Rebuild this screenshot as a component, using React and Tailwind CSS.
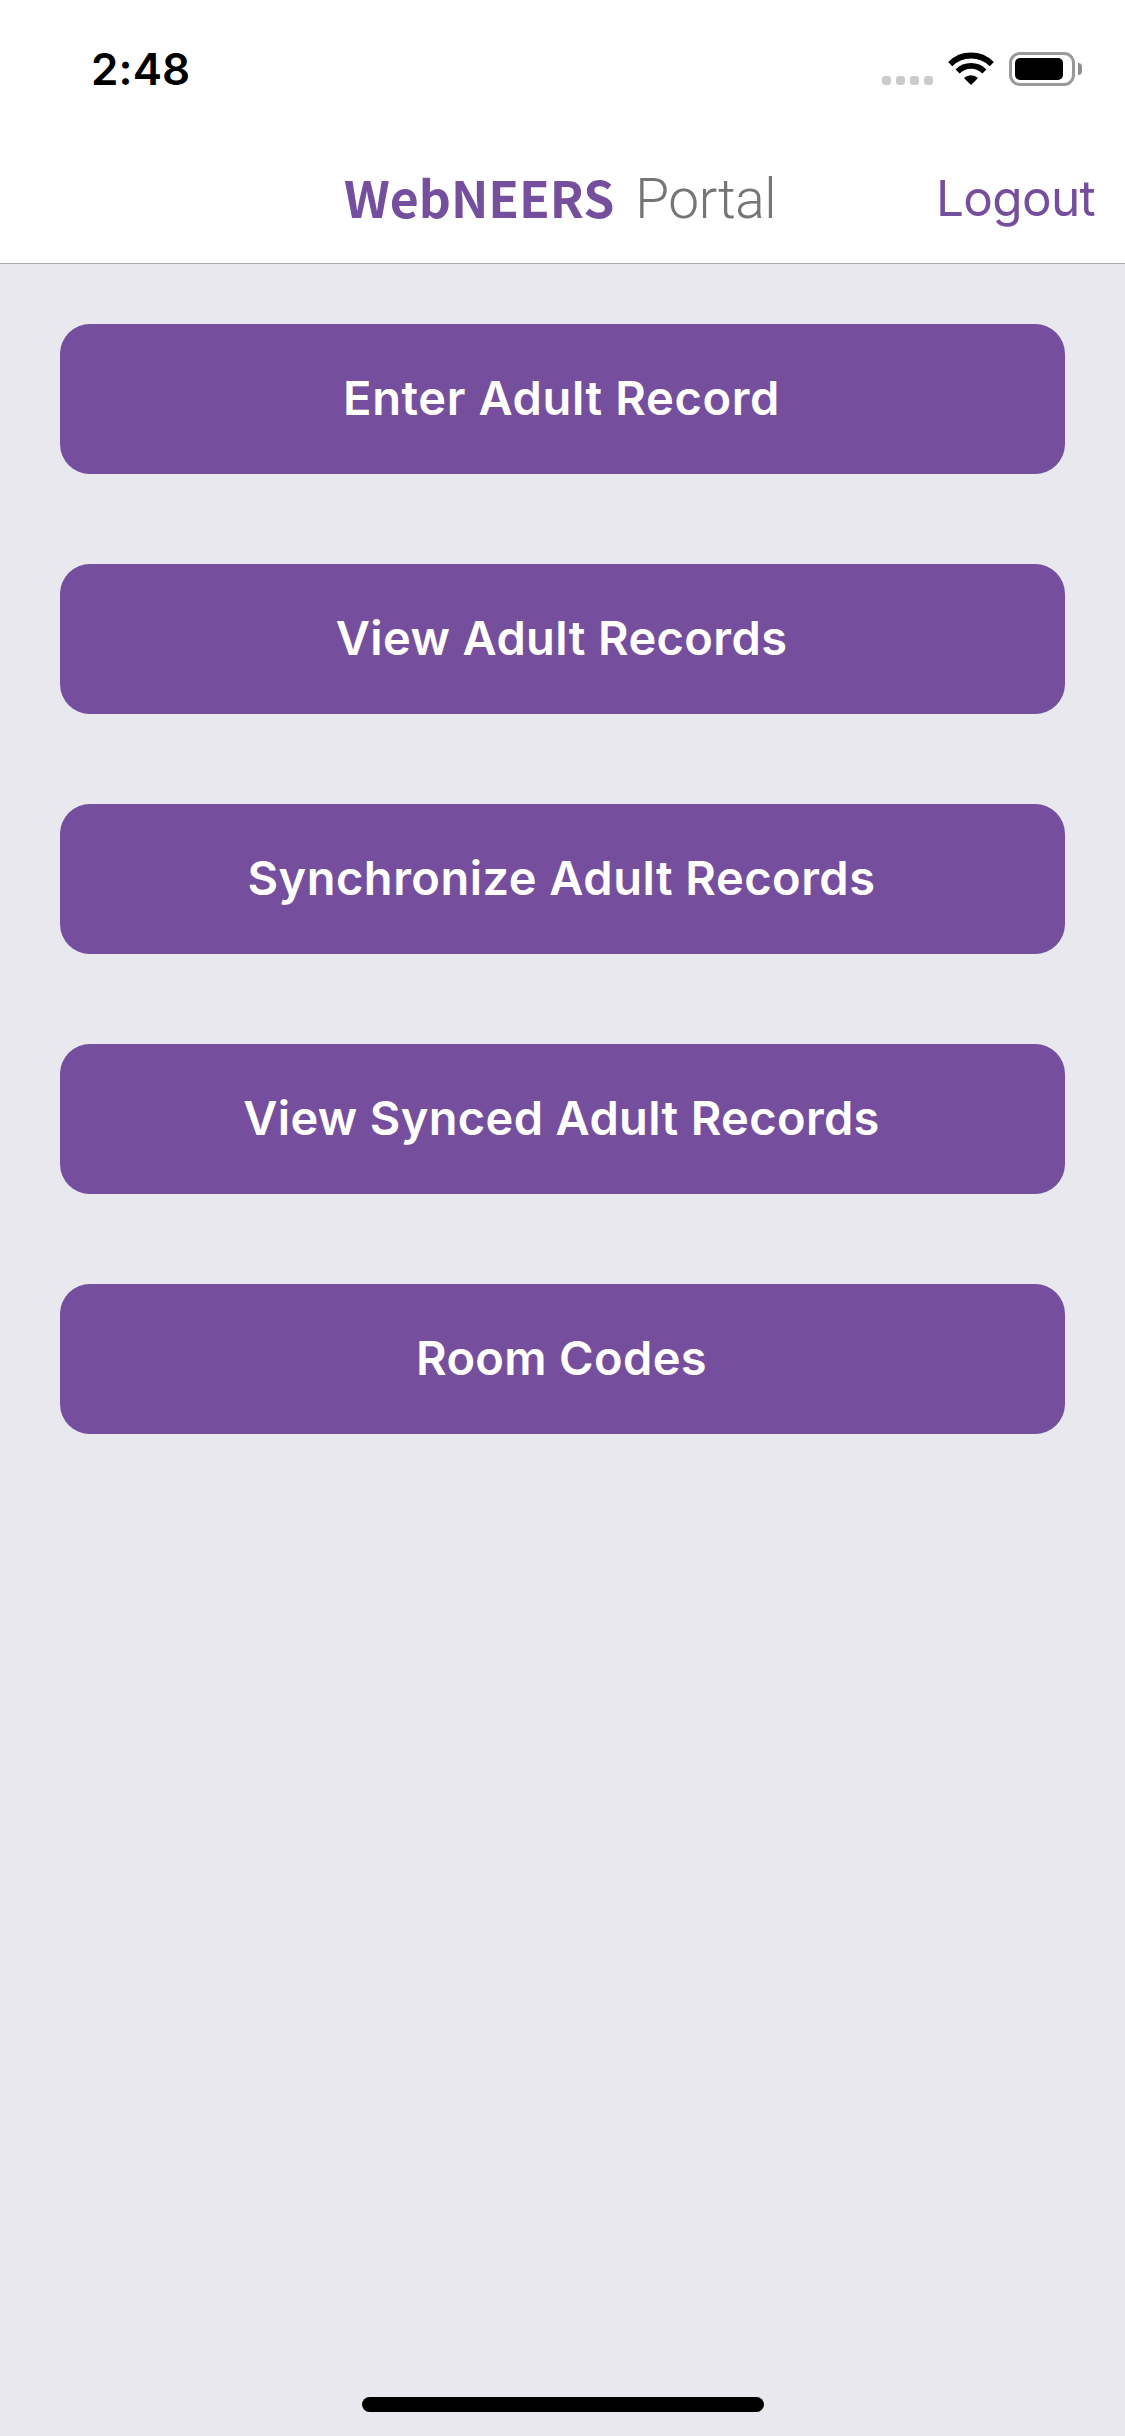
const ACTIONS = [
  { label: 'Enter Adult Record', tracking: 'tracking-[0.63px]' },
  { label: 'View Adult Records', tracking: 'tracking-[0.4px]' },
  { label: 'Synchronize Adult Records', tracking: 'tracking-[0.5px]' },
  { label: 'View Synced Adult Records', tracking: 'tracking-[0.35px]' },
  { label: 'Room Codes', tracking: 'tracking-[0.33px]' },
];

function SignalDots() {
  return (
    <div className="flex gap-[5px] pt-6">
      {[0, 1, 2, 3].map((dot) => (
        <span key={dot} className="size-[9px] rounded-[3px] bg-[#cbcbcb]" />
      ))}
    </div>
  );
}

function WifiIcon() {
  return (
    <svg className="ml-[15px] h-[33px] w-[46px]" viewBox="0 0 46 33" fill="none">
      <path d="M2.2 12.1a29.5 29.5 0 0 1 41.6 0" stroke="#000" strokeWidth="5.8" />
      <path d="M9.6 19.5a19 19 0 0 1 26.8 0" stroke="#000" strokeWidth="5.8" />
      <path d="M23 33l-7.1-7.1a10.6 10.6 0 0 1 14.2 0z" fill="#000" />
    </svg>
  );
}

function BatteryIcon() {
  return (
    <div className="ml-[15px] flex items-center">
      <div className="h-[34px] w-[66px] rounded-[11px] border-[3px] border-[#999] p-[3px]">
        <div className="h-[22px] w-12 rounded-[5px] bg-black" />
      </div>
      <div className="ml-[3px] h-3 w-1 rounded-r-full bg-[#8e8e8e]" />
    </div>
  );
}

export default function App() {
  return (
    <div className="flex h-[2436px] w-[1125px] flex-col bg-[#e9e8ee] font-['Inter',sans-serif]">
      <header className="h-[264px] border-b border-[#a8a7ab] bg-white">
        <div className="flex h-[132px] items-start justify-between pr-[43px] pl-[91px]">
          <time className="pt-[39px] text-[44px] leading-[60px] font-semibold tracking-[0.1px] text-black">2:48</time>
          <div className="flex items-start pt-[52px]">
            <SignalDots />
            <WifiIcon />
            <BatteryIcon />
          </div>
        </div>
        <div className="grid h-[131px] grid-cols-[1fr_auto_1fr] items-center">
          <h1 className="col-start-2 flex items-baseline pr-[5px] leading-[60px] blur-[0.6px]">
            <span className="font-['Noto_Sans_CJK_SC',sans-serif] text-[50px] font-bold text-[#754f9d]">WebNEERS</span>
            <span className="ml-[21px] font-['Roboto',sans-serif] text-[55px] font-light tracking-[-0.5px] text-[#757575]">Portal</span>
          </h1>
          <button className="justify-self-end pr-[30px] text-[49.5px] leading-[60px] tracking-[-0.7px] text-[#754f9d]">Logout</button>
        </div>
      </header>
      <main className="flex flex-1 flex-col gap-[90px] px-[60px] pt-[60px]">
        {ACTIONS.map(({ label, tracking }) => (
          <button
            key={label}
            className={`flex h-[150px] items-center justify-center rounded-[30px] bg-[#754f9d] pr-[2px] pb-[2px] text-[47px] leading-[60px] font-semibold whitespace-nowrap text-white ${tracking}`}
          >
            {label}
          </button>
        ))}
      </main>
      <footer className="flex justify-center pb-6">
        <div className="h-[15px] w-[402px] rounded-full bg-black" />
      </footer>
    </div>
  );
}
